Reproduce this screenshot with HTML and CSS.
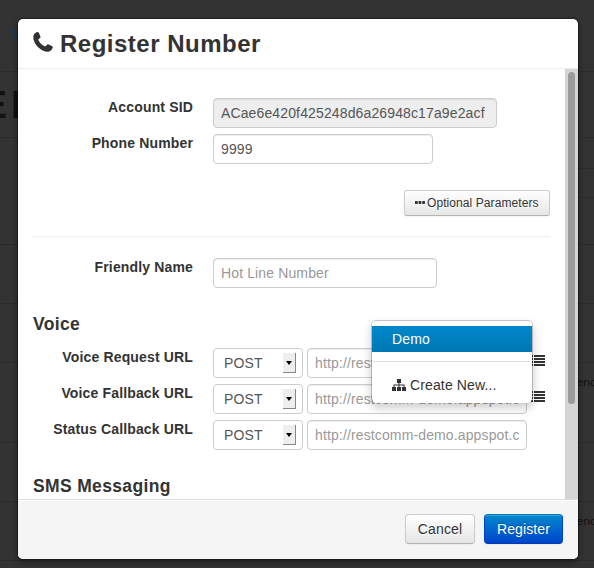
FILE: index.html
```html
<!DOCTYPE html>
<html lang="en">
<head>
<meta charset="utf-8">
<title>Register Number</title>
<link rel="stylesheet" href="styles.css">
</head>
<body>
<div class="page" aria-hidden="true">
  <i class="rule l r" style="top:71px"></i>
  <i class="rule l r" style="top:137px"></i>
  <i class="rule r" style="top:168px"></i>
  <i class="rule r" style="top:197px"></i>
  <i class="rule l r" style="top:244px"></i>
  <i class="rule l r" style="top:303px"></i>
  <i class="rule l r" style="top:362px"></i>
  <i class="rule l r" style="top:442px"></i>
  <i class="rule l r" style="top:501px"></i>
  <i class="rule l r" style="top:560px"></i>
  <span class="crumb">S</span>
  <span class="title">EI</span>
  <span class="cell first">enc</span>
  <span class="cell second">enc</span>
</div>

<div class="modal">
  <header class="modal-header">
    <svg class="phone" viewBox="0 0 20 20"><path d="M3.600.2C4.800-.1 5.600.2 6 1L7.400 4.400C7.600 5.200 7.400 5.700 6.800 6.200L5.700 7.100C5.300 7.500 5.300 7.900 5.600 8.400C7 11 9 13 11.700 14.300C12.200 14.500 12.600 14.400 12.900 14L13.800 12.900C14.300 12.300 14.900 12.200 15.600 12.500L18.900 13.900C19.700 14.300 19.900 14.800 19.700 15.600C19 18.300 17.200 19.800 14.800 19.800C8.200 19.800.3 12.100.3 5.400C.3 2.800 1.500.9 3.600.2Z"/></svg>
    <h3>Register Number</h3>
  </header>

  <div class="modal-body">
    <form class="form">
      <div class="row"><label>Account SID</label><input class="field sid" value="ACae6e420f425248d6a26948c17a9e2acf" disabled></div>
      <div class="row"><label>Phone Number</label><input class="field" value="9999"></div>
      <div class="optional"><button type="button" class="btn small"><svg class="dots" viewBox="0 0 10 3"><path d="M0 0h2.700v3H0zM3.600 0h2.700v3H3.600zM7.200 0h2.700v3H7.200z"/></svg><span>Optional Parameters</span></button></div>
      <hr>
      <div class="row"><label>Friendly Name</label><input class="field name" placeholder="Hot Line Number"></div>
      <h4>Voice</h4>
      <div class="row">
        <label>Voice Request URL</label>
        <div class="select"><span>POST</span><i class="arrow"></i></div>
        <input class="field" placeholder="http://restcomm-demo.appspot.com">
        <div class="picker">
          <svg class="list" viewBox="0 0 14 11"><path d="M0 0h2v2H0zM3 0h11v2H3zM0 3h2v2H0zM3 3h11v2H3zM0 6h2v2H0zM3 6h11v2H3zM0 9h2v2H0zM3 9h11v2H3z"/></svg>
          <div class="menu">
            <div class="item active">Demo</div>
            <div class="divider"></div>
            <div class="item"><svg class="sitemap" viewBox="0 0 14 12"><path d="M5 0h4v4H7.500v1.500H12.500V8H14v4h-4V8h1.500V6.500h-4V8H9v4H5V8h1.500V6.500h-4V8H4v4H0V8h1.500V5.500h5V4H5z"/></svg>Create New...</div>
          </div>
        </div>
      </div>
      <div class="row">
        <label>Voice Fallback URL</label>
        <div class="select"><span>POST</span><i class="arrow"></i></div>
        <input class="field" placeholder="http://restcomm-demo.appspot.com">
        <div class="picker"><svg class="list" viewBox="0 0 14 11"><path d="M0 0h2v2H0zM3 0h11v2H3zM0 3h2v2H0zM3 3h11v2H3zM0 6h2v2H0zM3 6h11v2H3zM0 9h2v2H0zM3 9h11v2H3z"/></svg></div>
      </div>
      <div class="row">
        <label>Status Callback URL</label>
        <div class="select"><span>POST</span><i class="arrow"></i></div>
        <input class="field" placeholder="http://restcomm-demo.appspot.com">
      </div>
      <h4>SMS Messaging</h4>
    </form>
    <div class="track"><div class="thumb"></div></div>
  </div>

  <footer class="modal-footer">
    <button type="button" class="btn cancel">Cancel</button>
    <button type="button" class="btn primary">Register</button>
  </footer>
</div>
</body>
</html>
```
FILE: styles.css
```css
* { box-sizing: border-box; }
body {
  margin: 0;
  width: 594px;
  height: 568px;
  overflow: hidden;
  background: #333;
  color: #333;
  font: 14px/20px "Liberation Sans", Arial, sans-serif;
  letter-spacing: .13px;
}
svg { fill: #333; display: block; flex: none; }

/* dimmed page behind the dialog */
.page { position: absolute; inset: 0; overflow: hidden; }
.rule { position: absolute; left: 0; right: 0; height: 1px; background: #2c2c2c; }
.rule.r:not(.l) { left: 578px; }
.crumb { position: absolute; left: 10px; top: 24px; color: #0f3f54; }
.title { position: absolute; left: -19px; top: 82px; font: bold 39px/46px "Liberation Sans", Arial, sans-serif; letter-spacing: 4px; color: #111; }
.cell { position: absolute; left: 577px; font-size: 11.500px; color: #111; }
.cell.first { top: 372px; }
.cell.second { top: 511px; }

.modal {
  position: relative;
  display: flex;
  flex-direction: column;
  width: 560px;
  height: 540px;
  margin: 19px 0 0 18px;
  background: #fff;
  border-radius: 5px;
  box-shadow: 0 0 0 1px rgba(0,0,0,.3), 0 3px 7px rgba(0,0,0,.45);
}
.modal-header {
  display: flex;
  align-items: flex-start;
  height: 50px;
  padding: 10px 15px 0;
  border-bottom: 1px solid #eee;
}
.phone { width: 20px; height: 20px; margin-top: 3px; }
h3 { margin: 0 0 0 7px; font-size: 24px; line-height: 30px; letter-spacing: .5px; }

.modal-body { display: flex; height: 430px; overflow: hidden; }
.form { flex: 1; padding: 29px 15px 0; }
.track { width: 13px; padding: 3px 3px 0; background: #d5d5d5; }
.thumb { height: 332px; border-radius: 4px; background: #999b9d; }

.row { display: flex; height: 30px; margin-bottom: 6px; }
label { width: 160px; margin-right: 20px; line-height: 19px; font-weight: bold; text-align: right; white-space: nowrap; letter-spacing: .15px; }
.field {
  width: 220px;
  height: 30px;
  padding: 0 7px;
  border: 1px solid #ccc;
  border-radius: 4px;
  background: #fff;
  box-shadow: inset 0 1px 1px rgba(0,0,0,.075);
  color: #555;
  font: inherit;
  letter-spacing: .13px;
}
.field::placeholder { color: #999; opacity: 1; }
.sid { width: 284px; background: #eee; }
.name { width: 224px; }

.optional { display: flex; justify-content: flex-end; margin-top: 26px; }
.btn {
  height: 30px;
  padding: 0;
  border: 1px solid #ccc;
  border-bottom-color: #b3b3b3;
  border-radius: 4px;
  background: linear-gradient(#fff, #e6e6e6);
  box-shadow: inset 0 1px 0 rgba(255,255,255,.2), 0 1px 2px rgba(0,0,0,.05);
  color: #333;
  font: inherit;
  letter-spacing: .13px;
  text-shadow: 0 1px 1px rgba(255,255,255,.75);
}
.small { display: flex; align-items: center; width: 146px; height: 26px; padding: 0 10px; border-radius: 3px; font-size: 12px; letter-spacing: .08px; white-space: nowrap; }
.dots { width: 10px; height: 3px; margin: -2px 2px 0 0; }
hr { height: 1px; margin: 20px 0 21px; border: 0; background: #eee; }
h4 { margin: 26px 0 14px; font-size: 17.500px; line-height: 20px; letter-spacing: .35px; }

.select {
  display: flex;
  align-items: center;
  justify-content: space-between;
  width: 90px;
  margin-right: 4px;
  padding: 0 6px 0 10px;
  border: 1px solid #ccc;
  border-radius: 4px;
  color: #555;
}
.arrow {
  display: flex;
  align-items: center;
  justify-content: center;
  width: 13px;
  height: 20px;
  border: solid #888;
  border-width: 0 1.500px 1.500px 0;
  background: #eee;
}
.arrow::after { content: ""; border: solid transparent; border-width: 4px 3px 0; border-top-color: #000; }

.picker { position: relative; margin: 7px 0 0 4px; }
.list { width: 14px; height: 11px; }
.menu {
  position: absolute;
  right: 12px;
  top: -35px;
  z-index: 2;
  width: 162px;
  height: 83px;
  padding: 5px 0;
  border: 1px solid rgba(0,0,0,.2);
  border-bottom: 0;
  border-radius: 5px;
  background: #fff;
  background-clip: padding-box;
  box-shadow: 0 5px 10px rgba(0,0,0,.2);
}
.item { display: flex; align-items: center; height: 26px; padding: 0 20px; white-space: nowrap; }
.active { background: linear-gradient(#08c, #0077b3); color: #fff; }
.divider { height: 1px; margin: 9px 1px 10px; background: #e0e0e0; }
.sitemap { width: 14px; height: 12px; margin-right: 4px; }

.modal-footer {
  display: flex;
  justify-content: flex-end;
  gap: 9px;
  flex: 1;
  padding: 14px 15px 0;
  border-top: 1px solid #ddd;
  border-radius: 0 0 5px 5px;
  background: #f5f5f5;
  box-shadow: inset 0 1px 0 #fff;
}
.cancel { width: 70px; }
.primary {
  width: 79px;
  border-color: #0077c0 #0044cc #003ab0;
  background: linear-gradient(#08c, #04c);
  color: #fff;
  text-shadow: 0 -1px 0 rgba(0,0,0,.25);
}
```
